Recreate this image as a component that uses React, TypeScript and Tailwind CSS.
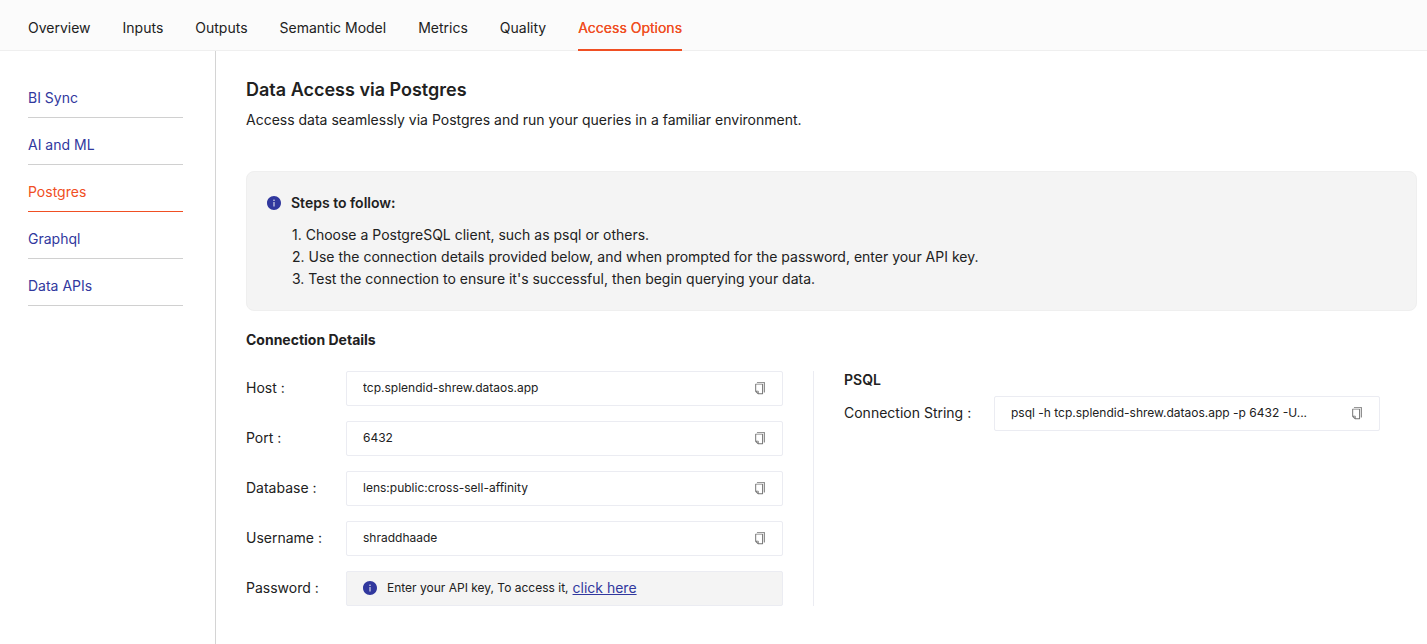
import { AiFillInfoCircle, AiOutlineCopy } from "react-icons/ai";

const tabs = ["Overview", "Inputs", "Outputs", "Semantic Model", "Metrics", "Quality", "Access Options"];
const activeTab = "Access Options";

const sections = ["BI Sync", "AI and ML", "Postgres", "Graphql", "Data APIs"];
const activeSection = "Postgres";

const steps = [
  "Choose a PostgreSQL client, such as psql or others.",
  "Use the connection details provided below, and when prompted for the password, enter your API key.",
  "Test the connection to ensure it's successful, then begin querying your data.",
];

const details = [
  { id: "host", label: "Host", value: "tcp.splendid-shrew.dataos.app" },
  { id: "port", label: "Port", value: "6432" },
  { id: "database", label: "Database", value: "lens:public:cross-sell-affinity" },
  { id: "username", label: "Username", value: "shraddhaade" },
];

function CopyField({ id, label, value }: { id: string; label: string; value: string }) {
  return (
    <div className="flex h-[35px] min-w-0 flex-1 items-center rounded-xs border border-[#ebecf2] bg-white pr-[15px] pb-0.5 pl-4">
      <input
        id={id}
        readOnly
        value={value}
        className="min-w-0 flex-1 bg-transparent text-xs text-[#212121] outline-none"
      />
      <button type="button" aria-label={`Copy ${label}`} className="cursor-pointer text-[#757575]">
        <AiOutlineCopy size={14} />
      </button>
    </div>
  );
}

export default function App() {
  return (
    <div className="flex min-h-screen flex-col bg-white font-['Inter',sans-serif] text-sm text-[#212121]">
      <nav className="flex gap-8 border-b border-[#efefef] bg-[#fbfbfb] px-7">
        {tabs.map((tab) => (
          <a
            key={tab}
            href="#"
            className={
              tab === activeTab
                ? "-mb-px border-b-2 border-[#f04f23] pt-[18px] pb-[11px] text-[#f04f23] [text-shadow:0_0_0_currentcolor]"
                : "-mb-px border-b-2 border-transparent pt-[18px] pb-[11px]"
            }
          >
            {tab}
          </a>
        ))}
      </nav>

      <div className="flex flex-1">
        <aside className="w-[216px] shrink-0 border-r border-[#d4d4d4] pt-5 pr-8 pl-7">
          {sections.map((section) => (
            <a
              key={section}
              href="#"
              className={
                section === activeSection
                  ? "block border-b border-[#f04f23] pt-[17px] pb-[9px] text-[#f04f23]"
                  : "block border-b border-[#d0d0d0] pt-[17px] pb-[9px] text-[#31389e]"
              }
            >
              {section}
            </a>
          ))}
        </aside>

        <main className="min-w-0 flex-1 pt-[25px] pr-[10px] pb-6 pl-[30px]">
          <h1 className="text-lg font-semibold">Data Access via Postgres</h1>
          <p className="mt-1.5">Access data seamlessly via Postgres and run your queries in a familiar environment.</p>

          <section className="mt-[41px] rounded-lg border border-[#efefef] bg-[#f4f4f4] px-[19px] pt-[21px] pb-5">
            <h2 className="flex items-center gap-[9px] font-semibold">
              <AiFillInfoCircle size={16} className="text-[#31389e]" />
              Steps to follow:
            </h2>
            <ol className="mt-[11px] pl-[26px] leading-[22px]">
              {steps.map((step, index) => (
                <li key={step}>
                  {index + 1}. {step}
                </li>
              ))}
            </ol>
          </section>

          <h2 className="mt-[19px] font-bold">Connection Details</h2>

          <div className="mt-[21px] grid grid-cols-2 pr-[37px]">
            <div className="flex flex-col gap-[15px] pr-[30px]">
              {details.map((detail) => (
                <div key={detail.id} className="flex items-center">
                  <label htmlFor={detail.id} className="w-[100px] shrink-0 pb-0.5">
                    {detail.label} :
                  </label>
                  <CopyField {...detail} />
                </div>
              ))}
              <div className="flex items-center">
                <span className="w-[100px] shrink-0 pb-0.5">Password :</span>
                <div className="flex h-[35px] min-w-0 flex-1 items-center rounded-xs border border-[#ebecf2] bg-[#f4f4f4] px-[15px] pb-0.5">
                  <AiFillInfoCircle size={16} className="shrink-0 text-[#31389e]" />
                  <span className="ml-[9px] text-xs">Enter your API key, To access it,</span>
                  <a href="#" className="ml-1 text-[#31389e] underline">
                    click here
                  </a>
                </div>
              </div>
            </div>

            <div className="border-l border-[#ebecf2] pl-[30px]">
              <h3 className="leading-[18px] font-semibold">PSQL</h3>
              <div className="mt-[7px] flex items-center">
                <label htmlFor="connection-string" className="w-[150px] shrink-0 pb-0.5">
                  Connection String :
                </label>
                <CopyField
                  id="connection-string"
                  label="Connection String"
                  value="psql -h tcp.splendid-shrew.dataos.app -p 6432 -U..."
                />
              </div>
            </div>
          </div>
        </main>
      </div>
    </div>
  );
}
